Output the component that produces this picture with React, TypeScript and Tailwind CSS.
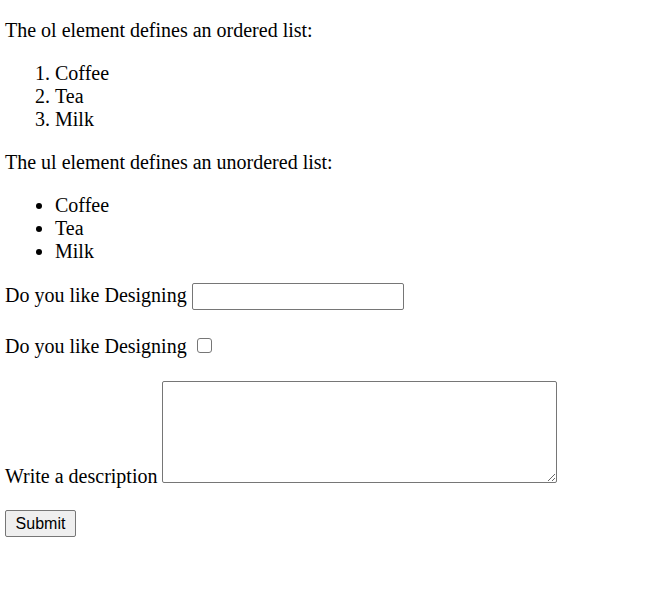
export default function App() {
  return (
    <div className="min-h-[593px] bg-white pl-[5px] pt-[19px] text-[20px] leading-[23px] text-black [font-family:'Liberation_Serif',serif]">
      <p>The ol element defines an ordered list:</p>
      <ol className="mt-[20px] list-decimal pl-[50px]">
        <li>Coffee</li>
        <li>Tea</li>
        <li>Milk</li>
      </ol>
      <p className="mt-[20px]">The ul element defines an unordered list:</p>
      <ul className="mt-[20px] list-disc pl-[50px]">
        <li>Coffee</li>
        <li>Tea</li>
        <li>Milk</li>
      </ul>
      <div className="mt-[20px] flex items-center gap-[5px]">
        <span className="mt-[-2px]">Do you like Designing</span>
        <input
          type="text"
          className="h-[27px] w-[212px] rounded-[2px] border border-[#767676] bg-white px-[2px]"
        />
      </div>
      <div className="mt-[25px] flex items-center gap-[10px]">
        <span>Do you like Designing</span>
        <input
          type="checkbox"
          className="mt-[-2px] h-[15px] w-[15px] appearance-none rounded-[3px] border border-[#767676] bg-white"
        />
      </div>
      <div className="mt-[23px] flex items-end gap-[5px]">
        <span className="mb-[-5px]">Write a description</span>
        <textarea className="h-[102px] w-[395px] resize rounded-[2px] border border-[#767676] bg-white" />
      </div>
      <button
        type="button"
        className="mt-[27px] h-[27px] w-[71px] rounded-[2px] border border-[#767676] bg-[#efefef] text-[16px] leading-[20px] text-black [font-family:'Liberation_Sans',Arial,sans-serif]"
      >
        Submit
      </button>
    </div>
  );
}
